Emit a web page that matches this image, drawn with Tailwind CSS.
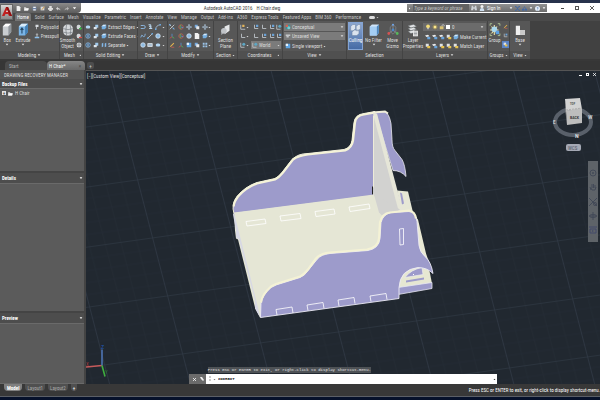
<!DOCTYPE html>
<html lang="en">
<head>
  <meta charset="UTF-8">
  <meta name="viewport" content="width=device-width, initial-scale=1.0">
  <title>Autodesk AutoCAD 2016 - H Chair.dwg</title>
  <script src="https://cdn.jsdelivr.net/npm/@tailwindcss/browser@4"></script>
</head>
<body class="flex h-screen flex-col overflow-hidden bg-[#383838] font-['Liberation_Sans_Narrow','Roboto_Condensed','Liberation_Sans',sans-serif] text-[5px] leading-[6px] text-[#dedede] [&_svg]:shrink-0">

  <!-- Icon set -->
  <svg class="hidden">
    <symbol id="box" viewBox="0 0 16 20"><path d="M2 5l4-4h8v12l-4 5H2z" fill="#c9cdd1"/><path d="M2 5l4-4h8l-4 4z" fill="#fff"/><path d="M10 5l4-4v12l-4 5z" fill="#8f959b"/></symbol>
    <symbol id="extrude" viewBox="0 0 16 20"><path d="M2 5l4-4h9v12l-4 5H2z" fill="#79b4e6"/><path d="M2 5l4-4h9l-4 4z" fill="#d9ecfa"/><path d="M11 5l4-4v12l-4 5z" fill="#4380b5"/><path d="M6.500 15V8M4.500 10l2-3 2 3" stroke="#21435f" fill="none" stroke-width="1.500"/></symbol>
    <symbol id="smooth" viewBox="0 0 16 20"><rect x="1" y="2" width="14" height="16" rx="6" fill="#d5d8db"/><path d="M1 8q7 3 14 0M1 13q7 3 14 0M6 2q-2 8 0 16M11 2q2 8 0 16" stroke="#777d83" fill="none"/></symbol>
    <symbol id="plane" viewBox="0 0 16 20"><path d="M1 11l5-4v7l-5 3z" fill="#9ea3a8"/><path d="M6 5l7-3v9l-7 5z" fill="#e5e7e9"/><circle cx="5" cy="11" r="4" fill="#bfc3c7"/></symbol>
    <symbol id="culling" viewBox="0 0 16 20"><path d="M1 5l3-3h4v6l-3 3H1zM9 5l3-3h3v6l-3 3H9zM3 13l3-3h7v5l-3 3H3z" fill="#dbe3ee" stroke="#6a7f9e" stroke-width=".7"/></symbol>
    <symbol id="filter" viewBox="0 0 16 20"><path d="M2 5l3-3h10v12l-3 4H2z" fill="#cfe4f8"/><path d="M2 5h10v13H2z" fill="#a4cdf3"/><path d="M12 5l3-3v12l-3 4z" fill="#4d86bd"/></symbol>
    <symbol id="gizmo" viewBox="0 0 16 20"><path d="M8 2v8l6 5M8 10l-6 5" fill="none" stroke="#9aa0a6"/><path d="M4 6l4-4 4 4v6l-4 4-4-4z" fill="none" stroke="#858b90"/><circle cx="8" cy="2.500" r="1.500" fill="#6da3e8"/><circle cx="2" cy="15" r="2" fill="#d65252"/><circle cx="14" cy="15" r="2" fill="#55b85b"/><circle cx="8" cy="10" r="2" fill="#4e88c7"/></symbol>
    <symbol id="layers" viewBox="0 0 16 20"><path d="M1 4l8-2 4 3-8 2zM1 8l8-2 4 3-8 2zM1 12l8-2 4 3-8 2z" fill="#e3e5e7" stroke="#676c70" stroke-width=".7"/><path d="M8 11h7v8H8z" fill="#f4f4f4"/><path d="M9 13h5M9 15h5M9 17h5" stroke="#7b8085"/></symbol>
    <symbol id="group" viewBox="0 0 16 20"><path d="M1 1h3M1 1v3M15 1h-3M15 1v3M1 18h3M1 18v-3M15 18h-3M15 18v-3" stroke="#c9e3a5"/><path d="M7 3v14M1 10h12M3 5l8 10M11 5l-8 10" stroke="#f1e7a9" stroke-width="1.500"/><circle cx="7" cy="9" r="4" fill="#a9d8ee"/><path d="M9 11h5v5H9z" fill="#5b9fe0"/></symbol>
    <symbol id="base" viewBox="0 0 16 20"><path d="M2 4h6v6h7v7H2z" fill="#f0f0f0"/><path d="M8 10h7v7H8z" fill="#c8c8c8"/></symbol>
    <symbol id="cube" viewBox="0 0 8 8"><path d="M1 3l2-2h4v4L5 7H1z" fill="#74aee0"/><path d="M1 3l2-2h4L5 3z" fill="#d5e8f7"/></symbol>
    <symbol id="cubes" viewBox="0 0 8 8"><path d="M3 1h4v4H3z" fill="#9fc8eb"/><path d="M1 4h4v3H1z" fill="#dfe6ec"/></symbol>
    <symbol id="ring" viewBox="0 0 8 8"><circle cx="4" cy="4" r="3" fill="#35577a" stroke="#8fb9e0"/><path d="M4 2v4" stroke="#d8e6f3"/></symbol>
    <symbol id="disc" viewBox="0 0 8 8"><rect x="1" y="2" width="6" height="4" rx="2" fill="#b3d6f3"/></symbol>
    <symbol id="split" viewBox="0 0 8 8"><path d="M1 2l2-1v5L1 7zM5 2l2-1v5L5 7z" fill="#82b8e8"/></symbol>
    <symbol id="poly" viewBox="0 0 8 8"><path d="M2 1h4v3H4v3H3V4H2z" fill="#d7dbdf"/></symbol>
    <symbol id="pull" viewBox="0 0 8 8"><path d="M1 5h6v2H1z" fill="#8cc0ee"/><path d="M4 5V1M3 2l1-1 1 1" stroke="#e4e8eb" fill="none"/></symbol>
    <symbol id="meshadd" viewBox="0 0 8 8"><rect x="1" y="1" width="5" height="6" rx="2" fill="#d3d6d9"/><path d="M4 6h4M6 4v4" stroke="#3cae46" stroke-width="1.300"/></symbol>
    <symbol id="meshdel" viewBox="0 0 8 8"><rect x="1" y="1" width="5" height="6" rx="2" fill="#d3d6d9"/><path d="M4 6h4" stroke="#d84b46" stroke-width="1.500"/></symbol>
    <symbol id="meshref" viewBox="0 0 8 8"><rect x="1" y="1" width="6" height="6" rx="2" fill="#dadcdf"/><path d="M1 4h6M4 1v6" stroke="#7d8287"/></symbol>
    <symbol id="pline" viewBox="0 0 8 8"><path d="M1 2h4q2 0 2 2t-2 2H1" fill="none" stroke="#90bdea" stroke-width="1.200"/></symbol>
    <symbol id="helix" viewBox="0 0 8 8"><path d="M2 1h3v2H3l3 1-3 2h4" fill="none" stroke="#bcd9f1" stroke-width="1.300"/></symbol>
    <symbol id="arc" viewBox="0 0 8 8"><path d="M1 7q0-5 6-6" fill="none" stroke="#b2cee6"/><path d="M0 6h2v2H0zM6 0h2v2H6z" fill="#6aa8e0"/></symbol>
    <symbol id="line" viewBox="0 0 8 8"><path d="M1 7l6-6" stroke="#dcdfe2"/><path d="M0 6h2v2H0zM6 0h2v2H6z" fill="#6aa8e0"/></symbol>
    <symbol id="spline" viewBox="0 0 8 8"><path d="M1 6q1-5 3-2t3-3" fill="none" stroke="#88b8e6" stroke-width="1.200"/></symbol>
    <symbol id="circle" viewBox="0 0 8 8"><circle cx="4" cy="4" r="3" fill="#8db9df" stroke="#d9e7f3"/></symbol>
    <symbol id="rect" viewBox="0 0 8 8"><path d="M1 2h6v4H1z" fill="#a9bfd2" stroke="#e6ebef"/></symbol>
    <symbol id="trim" viewBox="0 0 8 8"><path d="M1 1l2 2M5 5l2 2M7 1L1 7" stroke="#d9dde0"/><path d="M0 0h2v2H0zM5 5h2v2H5z" fill="#79aadb"/></symbol>
    <symbol id="rot3" viewBox="0 0 8 8"><circle cx="4" cy="4" r="3" fill="none" stroke="#c85a51"/><path d="M4 1q-3 3 0 6" fill="none" stroke="#5fb963"/><path d="M4 4l3 1" stroke="#5a96dd"/></symbol>
    <symbol id="move" viewBox="0 0 8 8"><path d="M4 0l1.500 2h-3zM4 8l1.500-2h-3zM0 4l2-1.500v3zM8 4L6 2.500v3z" fill="#bcd9f2"/><path d="M4 2v4M2 4h4" stroke="#bcd9f2" stroke-width=".8"/></symbol>
    <symbol id="copy" viewBox="0 0 8 8"><path d="M1 1h4v4H1z" fill="#79aadb"/><path d="M3 3h4v4H3z" fill="#e8ebee"/></symbol>
    <symbol id="pencil" viewBox="0 0 8 8"><path d="M1 7l1-2 4-4 1 1-4 4z" fill="#e4b44e"/><path d="M3 7h4" stroke="#d05d50"/></symbol>
    <symbol id="axis" viewBox="0 0 8 8"><path d="M4 1v4" stroke="#5a96dd"/><path d="M4 5L1 7" stroke="#d65252"/><path d="M4 5l3 2" stroke="#55b85b"/></symbol>
    <symbol id="grid4" viewBox="0 0 8 8"><path d="M1 1h2.500v2.500H1zM4.500 1H7v2.500H4.500zM1 4.500h2.500V7H1zM4.500 4.500H7V7H4.500z" fill="#9cc5ea"/></symbol>
    <symbol id="ucs" viewBox="0 0 8 8"><path d="M2 1v5h5" fill="none" stroke="#b4b9be" stroke-width="1.300"/><path d="M4 1h3v3H4z" fill="#6ba2d6"/></symbol>
    <symbol id="ucsw" viewBox="0 0 8 8"><path d="M1 1v6h5" fill="none" stroke="#b4b9be" stroke-width="1.300"/><circle cx="5" cy="3" r="2" fill="#5ea7c4"/></symbol>
    <symbol id="ucsy" viewBox="0 0 8 8"><path d="M1 1v6h6" fill="none" stroke="#b4b9be" stroke-width="1.300"/><path d="M3 1h3v3H3z" fill="#e2b45b"/></symbol>
    <symbol id="ucsl" viewBox="0 0 8 8"><path d="M2 1v5h5" fill="none" stroke="#b4b9be" stroke-width="1.300"/></symbol>
    <symbol id="style" viewBox="0 0 8 8"><path d="M1 1h6v6H1z" fill="#3d8f96"/><path d="M1 1h3v3H1z" fill="#d9604f"/><circle cx="5" cy="5" r="2" fill="#78cdd0"/></symbol>
    <symbol id="cam" viewBox="0 0 8 8"><path d="M1 2h6v2H5v2H2V4H1z" fill="#c4c7ca"/></symbol>
    <symbol id="port" viewBox="0 0 8 8"><path d="M1 1h6v6H1z" fill="#5fa5e3"/><path d="M1 1h3v3H1z" fill="#e8f1f9"/></symbol>
    <symbol id="bulb" viewBox="0 0 8 8"><circle cx="4" cy="3" r="2.500" fill="#f3dc78"/><path d="M3 5h2v2H3z" fill="#c9c9c9"/></symbol>
    <symbol id="sun" viewBox="0 0 8 8"><path d="M4 0v8M0 4h8M1 1l6 6M7 1L1 7" stroke="#b59f45" stroke-width=".7"/><circle cx="4" cy="4" r="2" fill="#ffe88a"/></symbol>
    <symbol id="lock" viewBox="0 0 8 8"><path d="M4 3V2q0-1 1.500-1T7 2v1" fill="none" stroke="#d7d7d7"/><path d="M1 3h5v4H1z" fill="#d8c275"/></symbol>
    <symbol id="lay" viewBox="0 0 8 8"><path d="M0 2l4-1 2 2-4 1z" fill="#eceef0"/><path d="M3 4h4v3H3z" fill="#69a4dc"/></symbol>
    <symbol id="layy" viewBox="0 0 8 8"><path d="M1 1h4v4H1z" fill="#dfe2e5"/><path d="M3 4h4v3H3z" fill="#e8c34f"/></symbol>
    <symbol id="page" viewBox="0 0 8 8"><path d="M1 0h4l2 2v6H1z" fill="#f0f0f0"/></symbol>
    <symbol id="folder" viewBox="0 0 8 8"><path d="M0 2h3l1 1h3v4H0z" fill="#d6d6d6"/><path d="M2 4h6L6 7H0z" fill="#fafafa"/></symbol>
    <symbol id="disk" viewBox="0 0 8 8"><path d="M1 1h6v6H1z" fill="#6e84a8"/><path d="M2 1h4v2H2zM2 5h4v2H2z" fill="#f3f3f3"/></symbol>
    <symbol id="diskas" viewBox="0 0 8 8"><path d="M1 1h6v6H1z" fill="#d6d8dc"/><path d="M7 1L3 6" stroke="#da9a3a" stroke-width="1.500"/></symbol>
    <symbol id="print" viewBox="0 0 8 8"><path d="M2 0h4v3H2zM0 3h8v3H0zM2 5h4v3H2z" fill="#dedede"/></symbol>
    <symbol id="undo" viewBox="0 0 8 8"><path d="M3 1v2q4 0 4 4-1-2-4-2v2L0 4z" fill="#d3d3d3"/></symbol>
    <symbol id="redo" viewBox="0 0 8 8"><path d="M5 1v2q-4 0-4 4 1-2 4-2v2l3-3z" fill="#b5b5b5"/></symbol>
    <symbol id="down" viewBox="0 0 6 4"><path d="M1 1h4L3 3.500z" fill="currentColor"/></symbol>
    <symbol id="bino" viewBox="0 0 8 8"><path d="M1 1h2v2h2V1h2l1 6H5V5H3v2H0z" fill="#cdd2d7"/></symbol>
    <symbol id="user" viewBox="0 0 8 8"><circle cx="4" cy="2" r="2" fill="#f1f1f1"/><path d="M1 8q0-4 3-4t3 4z" fill="#cfe0f0"/></symbol>
    <symbol id="xchg" viewBox="0 0 8 8"><path d="M0 1h2l4 6h2M8 1H6L2 7H0" fill="none" stroke="#3f68a8" stroke-width="1.500"/></symbol>
    <symbol id="tri" viewBox="0 0 8 8"><path d="M4 1L1 6h6z" fill="none" stroke="#3f68a8"/><circle cx="1.500" cy="6" r="1.500" fill="#3f68a8"/><circle cx="6.500" cy="6" r="1.500" fill="#3f68a8"/></symbol>
    <symbol id="help" viewBox="0 0 8 8"><circle cx="4" cy="4" r="4" fill="#e6eef7"/><path d="M3 3q1-2 2 0L4 5M4 6v1" stroke="#3f68a8" fill="none"/></symbol>
  </svg>

  <!-- Title bar -->
  <header class="flex h-[13px] shrink-0 border-t-[3px] border-[#27324c] bg-white whitespace-nowrap text-[#3a3a3a]">
    <div class="flex w-[81px] shrink-0 items-center gap-[3px] rounded-br bg-gradient-to-b from-[#8a8a8a] to-[#5c5c5c] pl-4">
      <svg class="size-[5px]"><use href="#page"/></svg>
      <svg class="size-[5px]"><use href="#folder"/></svg>
      <svg class="size-[5px]"><use href="#disk"/></svg>
      <svg class="size-[5px]"><use href="#diskas"/></svg>
      <svg class="size-[5px]"><use href="#print"/></svg>
      <svg class="size-[5px]"><use href="#undo"/></svg>
      <svg class="size-[5px]"><use href="#redo"/></svg>
      <svg class="h-1 w-[5px] text-white"><use href="#down"/></svg>
    </div>
    <h1 class="flex flex-1 items-center justify-center gap-1 pr-[22px] pl-[18px]"><span>Autodesk AutoCAD 2016</span><span>H Chair.dwg</span></h1>
    <div class="my-px flex w-[140px] shrink-0 items-center gap-[2px] bg-gradient-to-b from-[#919191] to-[#6d6d6d] pl-px text-white">
      <svg class="size-[3px] -rotate-90"><use href="#down"/></svg>
      <input type="text" aria-label="Search" placeholder="Type a keyword or phrase" class="h-2 w-[56px] bg-[#626262] px-px placeholder:text-[#c4c4c4] placeholder:italic">
      <svg class="size-[6px]"><use href="#bino"/></svg>
      <svg class="size-[6px]"><use href="#user"/></svg>
      <button class="flex-1 text-left">Sign In</button>
      <svg class="size-1"><use href="#down"/></svg>
      <svg class="size-[5px]"><use href="#xchg"/></svg>
      <svg class="size-[5px]"><use href="#tri"/></svg>
      <svg class="size-1"><use href="#down"/></svg>
      <svg class="size-[5px]"><use href="#help"/></svg>
      <svg class="mr-px size-1"><use href="#down"/></svg>
    </div>
    <div class="flex w-[53px] shrink-0 items-center justify-between pr-[6px] pl-[14px]">
      <button aria-label="Minimize" class="h-px w-[3px] bg-[#444]"></button>
      <button aria-label="Maximize" class="size-1 border border-[#555]"></button>
      <button aria-label="Close"><svg class="size-1" viewBox="0 0 4 4"><path d="M0 0l4 4M4 0L0 4" stroke="#333" stroke-width=".8"/></svg></button>
    </div>
  </header>

  <!-- Application menu, hangs over the tab row -->
  <button aria-label="Application menu" class="absolute top-1 left-0 flex h-4 w-[13px] items-center justify-center border border-[#666] bg-gradient-to-b from-[#d6d6d6] to-[#8b8b8b]">
    <svg class="size-[10px]" viewBox="0 0 10 10"><path d="M0 9L4 0h2l4 9H7L6 7H3.500L2.500 9z" fill="#c01f1f"/><path d="M4 0h2l4 9H8z" fill="#8e1212"/><path d="M5 3l1 2H4z" fill="#eee"/></svg>
  </button>

  <!-- Ribbon tabs -->
  <nav class="flex h-2 shrink-0 items-center gap-1 bg-[#4a4a4a] pl-[15px] whitespace-nowrap text-[#c4c4c4]">
    <a href="#" class="h-full rounded-t-xs bg-[#747474] px-[2px] pt-px text-white">Home</a>
    <a href="#">Solid</a>
    <a href="#">Surface</a>
    <a href="#">Mesh</a>
    <a href="#">Visualize</a>
    <a href="#">Parametric</a>
    <a href="#">Insert</a>
    <a href="#">Annotate</a>
    <a href="#">View</a>
    <a href="#">Manage</a>
    <a href="#">Output</a>
    <a href="#">Add-ins</a>
    <a href="#">A360</a>
    <a href="#">Express Tools</a>
    <a href="#">Featured Apps</a>
    <a href="#">BIM 360</a>
    <a href="#">Performance</a>
    <button aria-label="Ribbon options" class="ml-1 flex items-center gap-px"><span class="h-[3px] w-[6px] rounded-xs bg-[#dcdcdc]"></span><svg class="size-[3px]"><use href="#down"/></svg></button>
  </nav>

  <!-- Ribbon -->
  <main class="flex h-[38px] shrink-0 bg-[#414141] whitespace-nowrap">
    <section class="flex w-[60px] shrink-0 flex-col border-r border-[#444] bg-[#575757]">
      <div class="flex flex-1 gap-px pt-[2px]">
        <button class="flex w-[15px] flex-col items-center"><svg class="h-[14px] w-3"><use href="#box"/></svg>Box<svg class="h-[3px] w-1"><use href="#down"/></svg></button>
        <button class="flex w-4 flex-col items-center"><svg class="h-[14px] w-3"><use href="#extrude"/></svg>Extrude<svg class="h-[3px] w-1"><use href="#down"/></svg></button>
        <div class="flex flex-col gap-[3px] pt-px pl-[2px]">
          <button class="flex items-center gap-px"><svg class="size-[6px]"><use href="#poly"/></svg>Polysolid</button>
          <button class="flex items-center gap-px"><svg class="size-[6px]"><use href="#pull"/></svg>Presspull</button>
        </div>
      </div>
      <h2 class="flex h-2 items-center justify-center gap-px bg-[#505050]">Modeling<svg class="size-1"><use href="#down"/></svg></h2>
    </section>

    <section class="flex w-[24px] shrink-0 flex-col border-r border-[#444] bg-[#575757]">
      <div class="flex flex-1 justify-between pt-[2px] pr-px">
        <button class="flex w-[15px] flex-col items-center"><svg class="h-[14px] w-3"><use href="#smooth"/></svg>Smooth<br>Object</button>
        <div class="flex flex-col gap-[3px] pt-px">
          <svg class="size-[6px]"><use href="#meshadd"/></svg>
          <svg class="size-[6px]"><use href="#meshdel"/></svg>
          <svg class="size-[6px]"><use href="#meshref"/></svg>
        </div>
      </div>
      <h2 class="flex h-2 items-center justify-between bg-[#505050] pr-px pl-1">Mesh<svg class="size-[3px] -rotate-45"><use href="#down"/></svg></h2>
    </section>

    <section class="flex w-[54px] shrink-0 flex-col border-r border-[#444] bg-[#575757]">
      <div class="flex flex-1 flex-col gap-[3px] pt-[3px] pl-px">
        <div class="flex items-center gap-[2px]"><svg class="size-[6px]"><use href="#disc"/></svg><svg class="size-[6px]"><use href="#cubes"/></svg><button class="flex flex-1 items-center gap-px"><svg class="size-[6px]"><use href="#cube"/></svg>Extract Edges<svg class="size-[3px]"><use href="#down"/></svg></button></div>
        <div class="flex items-center gap-[2px]"><svg class="size-[6px]"><use href="#ring"/></svg><svg class="size-[6px]"><use href="#cubes"/></svg><button class="flex flex-1 items-center gap-px"><svg class="size-[6px]"><use href="#cube"/></svg>Extrude Faces<svg class="size-[3px]"><use href="#down"/></svg></button></div>
        <div class="flex items-center gap-[2px]"><svg class="size-[6px]"><use href="#ring"/></svg><svg class="size-[6px]"><use href="#cubes"/></svg><button class="flex flex-1 items-center gap-px"><svg class="size-[6px]"><use href="#split"/></svg>Separate<svg class="size-[3px]"><use href="#down"/></svg></button></div>
      </div>
      <h2 class="flex h-2 items-center justify-center gap-px bg-[#505050]">Solid Editing<svg class="size-1"><use href="#down"/></svg></h2>
    </section>

    <section class="flex w-[30px] shrink-0 flex-col border-r border-[#444] bg-[#575757]">
      <div class="grid flex-1 grid-cols-[7px_8px_7px_3px] content-start items-center gap-y-[3px] pt-[3px] pl-[2px]">
        <svg class="size-[6px]"><use href="#pline"/></svg><svg class="size-[6px]"><use href="#helix"/></svg><svg class="size-[6px]"><use href="#arc"/></svg><svg class="size-[3px]"><use href="#down"/></svg>
        <svg class="size-[6px]"><use href="#spline"/></svg><svg class="size-[6px]"><use href="#line"/></svg><svg class="size-[6px]"><use href="#circle"/></svg><svg class="size-[3px]"><use href="#down"/></svg>
        <svg class="size-[6px]"><use href="#circle"/></svg><svg class="size-[6px]"><use href="#rect"/></svg><svg class="size-[6px]"><use href="#disc"/></svg><svg class="size-[3px]"><use href="#down"/></svg>
      </div>
      <h2 class="flex h-2 items-center justify-center gap-px bg-[#505050]">Draw<svg class="size-1"><use href="#down"/></svg></h2>
    </section>

    <section class="flex w-[46px] shrink-0 flex-col border-r border-[#444] bg-[#575757]">
      <div class="grid flex-1 grid-cols-[9px_8px_8px_8px_6px_3px] content-start items-center gap-y-[3px] pt-[3px] pl-px">
        <svg class="size-[6px]"><use href="#trim"/></svg><svg class="size-[6px]"><use href="#rot3"/></svg><svg class="size-[6px]"><use href="#move"/></svg><svg class="size-[6px]"><use href="#copy"/></svg><svg class="size-[6px]"><use href="#move"/></svg><svg class="size-[3px]"><use href="#down"/></svg>
        <svg class="size-[6px]"><use href="#axis"/></svg><svg class="size-[6px]"><use href="#rot3"/></svg><svg class="size-[6px]"><use href="#circle"/></svg><svg class="size-[6px]"><use href="#page"/></svg><svg class="size-[6px]"><use href="#cube"/></svg><svg class="size-[3px]"><use href="#down"/></svg>
        <svg class="size-[6px]"><use href="#pencil"/></svg><svg class="size-[6px]"><use href="#axis"/></svg><svg class="size-[6px]"><use href="#port"/></svg><svg class="size-[6px]"><use href="#copy"/></svg><svg class="size-[6px]"><use href="#grid4"/></svg><svg class="size-[3px]"><use href="#down"/></svg>
      </div>
      <h2 class="flex h-2 items-center justify-center gap-px bg-[#505050]">Modify<svg class="size-1"><use href="#down"/></svg></h2>
    </section>

    <section class="flex w-[24px] shrink-0 flex-col border-r border-[#444] bg-[#575757]">
      <button class="flex flex-1 flex-col items-center pt-[2px]"><svg class="h-[14px] w-3"><use href="#plane"/></svg>Section<br>Plane</button>
      <h2 class="flex h-2 items-center justify-center gap-px bg-[#505050]">Section<svg class="size-[3px]"><use href="#down"/></svg></h2>
    </section>

    <section class="flex w-[45px] shrink-0 flex-col border-r border-[#444] bg-[#575757]">
      <div class="flex flex-1 flex-col gap-[3px] pt-[3px] pr-px pl-[2px]">
        <div class="grid h-[6px] grid-cols-[6px_7px_8px_8px_7px_6px] items-center"><svg class="size-[6px]"><use href="#ucsy"/></svg><svg class="size-[3px]"><use href="#down"/></svg><svg class="size-[6px]"><use href="#ucs"/></svg><svg class="size-[6px]"><use href="#ucsl"/></svg><svg class="size-[6px]"><use href="#ucs"/></svg><svg class="size-[6px]"><use href="#ucsw"/></svg></div>
        <div class="grid h-[6px] grid-cols-[6px_7px_8px_8px_7px_6px] items-center"><svg class="size-[6px]"><use href="#ucsl"/></svg><svg class="size-[3px]"><use href="#down"/></svg><svg class="size-[6px]"><use href="#ucsl"/></svg><svg class="size-[6px]"><use href="#ucs"/></svg><svg class="size-[6px]"><use href="#ucs"/></svg><svg class="size-[6px]"><use href="#ucs"/></svg></div>
        <div class="flex h-[6px] items-center"><svg class="size-[6px]"><use href="#ucsw"/></svg><svg class="size-[3px]"><use href="#down"/></svg>
          <div class="ml-[2px] flex h-2 flex-1 items-center gap-px bg-[#7b7b7b] px-px"><svg class="size-[6px]"><use href="#ucsw"/></svg><select aria-label="Coordinate system" class="w-0 flex-1 appearance-none"><option>World</option></select><svg class="size-[3px]"><use href="#down"/></svg></div>
        </div>
      </div>
      <h2 class="flex h-2 items-center justify-center gap-[6px] bg-[#505050] pl-2">Coordinates<svg class="size-[3px] -rotate-45"><use href="#down"/></svg></h2>
    </section>

    <section class="flex w-[64px] shrink-0 flex-col border-r border-[#444] bg-[#575757]">
      <div class="flex flex-1 flex-col gap-px px-px pt-[2px]">
        <div class="flex h-2 items-center gap-px bg-[#7b7b7b] px-px"><svg class="size-[6px]"><use href="#style"/></svg><select aria-label="Visual style" class="flex-1 appearance-none"><option>Conceptual</option></select><svg class="size-1"><use href="#down"/></svg></div>
        <div class="flex h-2 items-center gap-px bg-[#7b7b7b] px-px"><svg class="size-[6px]"><use href="#cam"/></svg><select aria-label="Saved view" class="flex-1 appearance-none"><option>Unsaved View</option></select><svg class="size-1"><use href="#down"/></svg></div>
        <button class="flex h-[10px] items-center gap-px px-px"><svg class="size-[6px]"><use href="#port"/></svg>Single viewport<svg class="size-[3px]"><use href="#down"/></svg></button>
      </div>
      <h2 class="flex h-2 items-center justify-center gap-px bg-[#505050]">View<svg class="size-1"><use href="#down"/></svg></h2>
    </section>

    <section class="flex w-[56px] shrink-0 flex-col border-r border-[#444] bg-[#575757]">
      <div class="flex flex-1 gap-px pt-px pb-px pl-px">
        <button class="flex w-[15px] flex-col items-center border border-[#83a3d3] bg-gradient-to-b from-[#8ba6d0] to-[#466ba5] text-white"><svg class="h-[14px] w-[11px]"><use href="#culling"/></svg>Culling</button>
        <button class="flex w-[19px] flex-col items-center pt-px"><svg class="h-[14px] w-3"><use href="#filter"/></svg>No Filter<svg class="h-[3px] w-1"><use href="#down"/></svg></button>
        <button class="flex w-[17px] flex-col items-center pt-px"><svg class="h-[14px] w-3"><use href="#gizmo"/></svg>Move<br>Gizmo</button>
      </div>
      <h2 class="flex h-2 items-center justify-center bg-[#505050]">Selection</h2>
    </section>

    <section class="flex w-[85px] shrink-0 flex-col border-r border-[#444] bg-[#575757]">
      <div class="flex flex-1 pt-[2px]">
        <button class="flex w-[20px] flex-col items-center"><svg class="h-[14px] w-3"><use href="#layers"/></svg>Layer<br>Properties</button>
        <div class="flex flex-1 flex-col gap-[3px] pr-px">
          <div class="flex h-2 items-center gap-px bg-[#6b6b6b] px-[2px]"><svg class="size-[6px]"><use href="#bulb"/></svg><svg class="size-[6px]"><use href="#sun"/></svg><svg class="size-[6px]"><use href="#lock"/></svg><span class="size-1 bg-white"></span><select aria-label="Layer" class="flex-1 appearance-none pl-px"><option>0</option></select><svg class="size-1"><use href="#down"/></svg></div>
          <div class="flex items-center gap-px pl-[2px]"><svg class="size-[6px]"><use href="#lay"/></svg><svg class="size-[6px]"><use href="#lay"/></svg><svg class="size-[6px]"><use href="#lay"/></svg><svg class="size-[6px]"><use href="#layy"/></svg><button class="flex items-center gap-px"><svg class="size-[6px]"><use href="#cube"/></svg>Make Current</button></div>
          <div class="flex items-center gap-px pl-[2px]"><svg class="size-[6px]"><use href="#layy"/></svg><svg class="size-[6px]"><use href="#lay"/></svg><svg class="size-[6px]"><use href="#layy"/></svg><svg class="size-[6px]"><use href="#layy"/></svg><button class="flex items-center gap-px"><svg class="size-[6px]"><use href="#layy"/></svg>Match Layer</button></div>
        </div>
      </div>
      <h2 class="flex h-2 items-center justify-center gap-px bg-[#505050]">Layers<svg class="size-1"><use href="#down"/></svg></h2>
    </section>

    <section class="flex w-[22px] shrink-0 flex-col border-r border-[#444] bg-[#575757]">
      <div class="flex flex-1 justify-between pt-[2px]">
        <button class="flex w-[13px] flex-col items-center"><svg class="h-[14px] w-3"><use href="#group"/></svg>Group</button>
        <div class="flex flex-col gap-[2px]"><svg class="size-[7px] p-px"><use href="#pencil"/></svg><svg class="size-[7px] p-px"><use href="#ucs"/></svg><svg class="size-[7px] bg-[#5b83c4] p-px"><use href="#layy"/></svg></div>
      </div>
      <h2 class="flex h-2 items-center justify-center gap-px bg-[#505050]">Groups<svg class="size-[3px]"><use href="#down"/></svg></h2>
    </section>

    <section class="flex w-[20px] shrink-0 flex-col bg-[#575757]">
      <button class="flex flex-1 flex-col items-center pt-[2px]"><svg class="h-[14px] w-3"><use href="#base"/></svg>Base<svg class="h-[3px] w-1"><use href="#down"/></svg></button>
      <h2 class="flex h-2 items-center justify-center gap-px bg-[#505050]">View<svg class="size-[3px]"><use href="#down"/></svg></h2>
    </section>
  </main>

  <!-- File tabs -->
  <nav class="mt-[2px] flex h-[9px] shrink-0 items-center bg-[#363636]">
    <a href="#" class="ml-[5px] flex h-full w-[42px] items-center rounded-t-sm bg-[#4b4b4b] pl-1 text-[#b5b5b5]">Start</a>
    <a href="#" class="flex h-full w-[38px] items-center justify-between rounded-t-sm bg-gradient-to-b from-[#868686] to-[#696969] pr-1 pl-[2px] text-white"><span>H Chair*</span><span class="text-[#444]">×</span></a>
    <button aria-label="New tab" class="ml-[2px] flex size-[7px] items-center justify-center rounded-xs bg-[#4d4d4d] text-[#ccc]">+</button>
  </nav>

  <div class="flex min-h-0 flex-1">
    <!-- Drawing recovery manager -->
    <aside class="flex w-[86px] shrink-0 flex-col border-r-2 border-[#444] bg-[#5b5b5b]">
      <h2 class="flex h-[9px] items-center bg-[#555] pl-1 whitespace-nowrap">DRAWING RECOVERY MANAGER</h2>
      <h3 class="flex h-[9px] items-center justify-between bg-[#4d4d4d] pr-px pl-[2px] font-bold text-white">Backup Files<svg class="size-1"><use href="#down"/></svg></h3>
      <ul class="h-[83px] border-t border-[#6a6a6a] pt-px pl-[2px]">
        <li class="flex items-center gap-[2px]"><span class="flex size-1 items-center justify-center bg-[#e2e2e2] text-[#333]">+</span><svg class="size-[5px]"><use href="#folder"/></svg>H Chair</li>
      </ul>
      <h3 class="flex h-3 items-center justify-between border-t-2 border-[#444] bg-[#4d4d4d] pr-px pl-[2px] font-bold text-white">Details<svg class="size-1"><use href="#down"/></svg></h3>
      <div class="flex-1 border-t border-[#6a6a6a]"></div>
      <h3 class="flex h-3 items-center justify-between border-t-2 border-[#444] bg-[#4d4d4d] pr-px pl-[2px] font-bold text-white">Preview<svg class="size-1"><use href="#down"/></svg></h3>
      <div class="h-[61px] border-y border-[#6a6a6a]"></div>
    </aside>

    <!-- Model space -->
    <div class="relative min-w-0 flex-1 border-t border-[#555] bg-[#212830]">
      <svg class="absolute inset-0 size-full" viewBox="86 71 514 314" preserveAspectRatio="xMidYMid slice">
        <defs>
          <pattern id="grid" width="100" height="100" patternUnits="userSpaceOnUse" patternTransform="matrix(.78 -.11 .15 .58 122 122)">
            <path d="M20 0v100M40 0v100M60 0v100M80 0v100M0 20h100M0 40h100M0 60h100M0 80h100" stroke="#242b34" stroke-width="1.200"/>
            <path d="M0 0v100M0 0h100" stroke="#2e3742" stroke-width="2.400"/>
          </pattern>
        </defs>
        <rect x="86" y="71" width="514" height="314" fill="url(#grid)"/>

        <!-- chair: far side, back rest, seat, near side -->
        <path d="M234 214Q231 205 237 197Q245 187 257 183L275 179Q279 177 282 173L292 160Q298 154 308 154L344 150Q351 148 352 141L354 123Q355 115 364 114L375 112V196z" fill="#9d9bcb" stroke="#f2f1dc" stroke-width="1"/>
        <path d="M234 207Q233 204 238 197Q246 188 257 184L275 180Q279 178 283 173L293 160Q299 156 308 155L345 151Q352 148 353 141L355 123Q356 116 364 115L375 113" fill="none" stroke="#f5f3d8" stroke-width="2.200"/>
        <path d="M375 113L385 112Q389 114 391 124L392 140Q392 148 395 151L402 160Q405 165 406 177Q401 171 393 171z" fill="#9d9bcb" stroke="#e9e8ee" stroke-width=".8"/>
        <path d="M373 113L385 112L388 114" fill="none" stroke="#f0eedb" stroke-width="2"/>
        <path d="M397 191L408 192L413 213L402 213z" fill="#e6e7d6"/>
        <path d="M400 193l2 1 2 10-2 1z" fill="#9d9bcb"/>
        <path d="M374 115L401 211L383 220L373 195z" fill="#d2d2d0"/>
        <path d="M373 114L377 114L403 212L399 213L375 122z" fill="#e6e6d8"/>
        <path d="M373.500 116V188" stroke="#edebd8" stroke-width="1"/>
        <path d="M372.500 187v8" stroke="#222" stroke-width="1"/>
        <path d="M234 213L374 195L384 216L382 252L260 318L255 308L238 240L236 239L235 231z" fill="#e5e6d5"/>
        <path d="M374 195L400 210L384 218L379 213z" fill="#d2d2d0"/>
        <path d="M234 213L258 308L260 318L255 309V301L239 240L236 238V231L233 215z" fill="#d7d8e4"/>
        <path d="M246 222L265 219.500L266 224L247 226.500zM280 216.500L300 214L301 219L281 221.500zM315 212L334 209.500L335 214.500L316 217zM349 207.500L369 204.500L370 209L350 212z" fill="none" stroke="#fff" stroke-width=".8"/>
        <path d="M412 213L418 220L426 254L433 274L419 250z" fill="#e9e9d4"/>
        <path d="M398 290L400 272L410 264H428L432 284z" fill="#e6e7d2"/>
        <path d="M405 278Q411 270 422 268L423 275z" fill="#9d9bcb" stroke="#eee" stroke-width=".7"/>
        <path d="M413 275h1" stroke="#fff"/>
        <path d="M406 281L424 278V280L406 283z" fill="#9d9bcb"/>
        <path d="M398 288L432 283V289L398 295z" fill="#9d9bcb" stroke="#e9e8f3" stroke-width=".8"/>
        <path d="M260.500 318L261 304Q262 296 271 288Q276 285 284 283L300 278Q305 276 308 271L317 260Q321 255 330 254L368 251Q379 249 380 239L381 223Q383 215 391 213L409 212Q416 213 417 222L419 246Q420 253 425 257Q431 262 433 274Q427 268 418 268Q400 270 399 288V299z" fill="#9d9bcb" stroke="#ecebf5" stroke-width=".9"/>
        <path d="M261 303Q262 295 271 287Q276 284 284 282L300 277Q304 275 308 270L316 259Q320 254 330 253L367 250Q378 248 379 239L380 223Q382 214 390 213L409 211Q415 212 416 219" fill="none" stroke="#f4f2d5" stroke-width="2.200"/>
        <path d="M277 315.500L276 310L292 307.500L293 313.500M308 311L307 305.500L323 303L324 309M339 306.500L338 300.500L354 298L355 304M371 302L370 296.500L386 294L387 300M399.500 229.500L403.500 229V245L400 245.500z" fill="none" stroke="#fff" stroke-width=".8"/>

        <!-- UCS icon -->
        <path d="M86 367.500L102 366" stroke="#c65a5a" stroke-width="1.600"/>
        <path d="M102 366V350" stroke="#4d74b3" stroke-width="1.600"/>
        <path d="M102 366L105 377" stroke="#3fae3f" stroke-width="1.600"/>
        <text x="101" y="349" font-size="6" fill="#2257b0">Z</text>
        <text x="86" y="366" font-size="5" fill="#a33a3a">X</text>
        <text x="105" y="374" font-size="5" fill="#2c7f2c">Y</text>
      </svg>

      <p class="absolute top-[2px] left-px">[−][Custom View][Conceptual]</p>
      <div class="absolute top-[2px] right-1 flex items-center gap-1 text-white">
        <span class="mt-[2px] h-px w-[3px] bg-white"></span><span class="size-[3px] border border-white"></span><svg class="size-[3px]" viewBox="0 0 4 4"><path d="M0 0l4 4M4 0L0 4" stroke="#fff"/></svg>
      </div>

      <!-- View cube -->
      <svg class="absolute top-[24px] right-[4px] h-[50px] w-[46px] font-bold" viewBox="550 95 46 50">
        <ellipse cx="573" cy="122" rx="18" ry="13" fill="none" stroke="#59606a" stroke-width="4"/>
        <path d="M565 99L580 98L582 109L566 111z" fill="#d2d2d2"/>
        <path d="M566 111L582 108V123L567 125z" fill="#bdbdbd"/>
        <path d="M565 99L566 111L567 125L565.500 112z" fill="#999"/>
        <path d="M566 110L582 108" stroke="#8a8a8a" stroke-width=".5" stroke-dasharray="2 1"/>
        <text x="570" y="105" font-size="3" fill="#555">TOP</text>
        <text x="570" y="119" font-size="4" fill="#3c3c3c">BACK</text>
        <text x="553" y="124" font-size="5" fill="#c5c8cb">E</text>
        <text x="588" y="119" font-size="6" fill="#c5c8cb">W</text>
        <text x="575" y="138" font-size="6" fill="#d5d8db">N</text>
      </svg>
      <button class="absolute top-[73px] right-[19px] flex h-[7px] w-[15px] items-center rounded-xs bg-[#a5a9b5] pl-[2px] text-[#4f5564]">WCS</button>

      <!-- Navigation bar -->
      <div class="absolute top-[90px] right-[2px] flex h-[81px] w-[10px] flex-col items-center justify-between bg-[#5e6368] py-2">
        <svg class="size-2" viewBox="0 0 8 8"><circle cx="4" cy="4" r="3" fill="none" stroke="#434a58"/><circle cx="4" cy="4" r="1" fill="#434a58"/></svg>
        <svg class="size-2" viewBox="0 0 8 8"><path d="M2 7L1 4M3 5V1M4.500 5V1M6 5V2M2 5l1 2h3l1-3" fill="none" stroke="#434a58"/></svg>
        <svg class="size-2" viewBox="0 0 8 8"><path d="M0 0l8 8M8 0L0 8" stroke="#434a58"/><circle cx="6" cy="6" r="1.500" fill="none" stroke="#434a58"/></svg>
        <svg class="size-2" viewBox="0 0 8 8"><path d="M4 0v8M0 4h8" stroke="#434a58"/><ellipse cx="4" cy="4" rx="3.500" ry="1.500" fill="none" stroke="#434a58"/></svg>
        <svg class="size-2" viewBox="0 0 8 8"><path d="M0 1h8M1 3h6v4H1z" fill="none" stroke="#434a6a"/><path d="M3 4l2 1-2 1z" fill="#434a6a"/></svg>
      </div>

      <!-- Command line -->
      <div class="absolute bottom-0 left-[20%] w-[60%]">
        <p class="ml-[19px] w-fit bg-[#4e5256] font-['Liberation_Mono',monospace] text-[4px] whitespace-nowrap text-[#e5e5e5]">Press ESC or ENTER to exit, or right-click to display shortcut-menu.</p>
        <div class="mt-px flex h-[10px] items-center bg-white">
          <div class="flex h-full w-[17px] items-center justify-end gap-1 bg-[#6b6b6b] pr-[2px]">
            <svg class="size-[3px]" viewBox="0 0 4 4"><path d="M0 0l4 4M4 0L0 4" stroke="#fff"/></svg>
            <svg class="size-1" viewBox="0 0 4 4"><path d="M0 0h2l2 3-1 1-2-2z" fill="#eee"/></svg>
          </div>
          <span class="flex items-center gap-[2px] pl-[3px] text-[#777]"><svg class="h-[6px] w-[2px]" viewBox="0 0 2 6"><path d="M1 0v6" stroke="#999" stroke-dasharray="2 1"/></svg><svg class="size-[3px]"><use href="#down"/></svg></span>
          <input type="text" aria-label="Command" value="3DORBIT" class="min-w-0 flex-1 pl-[2px] font-['Liberation_Mono',monospace] text-[4px] font-bold text-[#222]">
          <svg class="mr-px size-[3px] rotate-180 text-[#333]"><use href="#down"/></svg>
        </div>
      </div>
    </div>
  </div>

  <!-- Layout tabs and status -->
  <footer class="flex h-3 shrink-0 items-center justify-between pl-1">
    <nav class="flex items-start gap-[3px] self-start text-[#aaa]">
      <a href="#" class="rounded-b bg-[#808080] px-[3px] pt-px font-bold text-white">Model</a>
      <a href="#" class="rounded-b bg-[#505050] px-[2px] pt-px">Layout1</a>
      <a href="#" class="rounded-b bg-[#505050] px-[2px] pt-px">Layout2</a>
      <button aria-label="Add layout" class="rounded-b bg-[#505050] px-[2px] pt-px text-white">+</button>
    </nav>
    <p class="whitespace-nowrap text-white">Press ESC or ENTER to exit, or right-click to display shortcut-menu.</p>
  </footer>
  <div class="h-1 shrink-0 border-t border-[#5b5f66] bg-[#06112b]"></div>
</body>
</html>
